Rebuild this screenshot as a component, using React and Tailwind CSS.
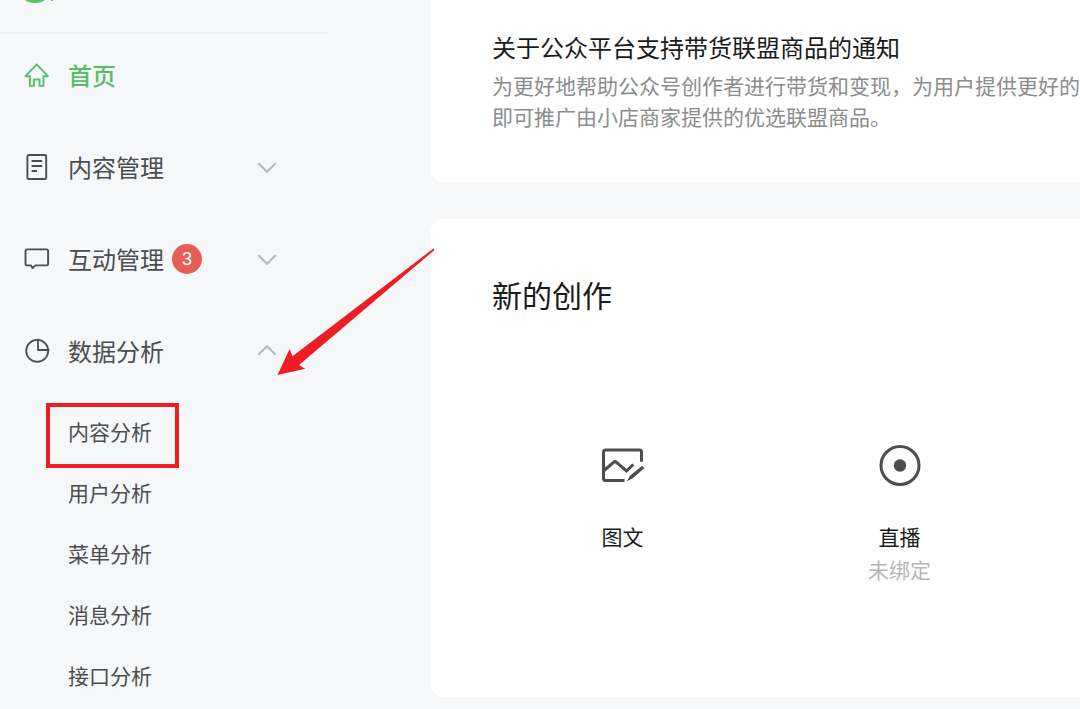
import React, { useState } from 'react';

const HomeIcon = () => (
    <svg className="w-[26px] h-[26px] shrink-0" viewBox="0 0 26 26" fill="none" stroke="currentColor" strokeWidth="1.9" strokeLinejoin="round">
        <path d="M12.7 2.4 1.5 14.200h4.400v9.700h4v-6.400h5.600v6.400h4v-9.700h4.400z" />
    </svg>
);

const DocIcon = () => (
    <svg className="w-[26px] h-[26px] shrink-0" viewBox="0 0 26 26" fill="none" stroke="currentColor" strokeWidth="1.9">
        <rect x="3.4" y="0.95" width="18.8" height="24.1" rx="1.4" />
        <path d="M7.600 7h10.600M7.600 12h10.600M7.600 17h5.400" />
    </svg>
);

const ChatIcon = () => (
    <svg className="w-[26px] h-[26px] shrink-0" viewBox="0 0 26 26" fill="none" stroke="currentColor" strokeWidth="1.9" strokeLinejoin="round">
        <path d="M3 3.4h19.600a1.500 1.500 0 0 1 1.500 1.500v13a1.500 1.500 0 0 1-1.500 1.500H11.400L8.600 22.200 7 19.400H3a1.500 1.500 0 0 1-1.500-1.500v-13A1.500 1.500 0 0 1 3 3.400z" />
    </svg>
);

const PieIcon = () => (
    <svg className="w-[26px] h-[26px] shrink-0" viewBox="0 0 26 26" fill="none" stroke="currentColor" strokeWidth="1.8" strokeLinejoin="round">
        <circle cx="13.200" cy="12.800" r="11" />
        <path d="M14 0.800v11.200h11.300" />
    </svg>
);

const Chevron = ({ open }) => (
    <svg className="w-[20px] h-[12px] ml-auto shrink-0 text-[#b4b6b8]" viewBox="0 0 20 12" fill="none" stroke="currentColor" strokeWidth="2">
        {open ? <path d="M1.300 9.800 10 1.200 18.700 9.800" /> : <path d="M1.300 2.200 10 10.800 18.700 2.200" />}
    </svg>
);

const ArticleIcon = () => (
    <svg className="w-[44px] h-[44px]" viewBox="0 0 44 44" fill="none" stroke="currentColor" strokeWidth="3">
        <path d="M23.500 37.500H4.500a2 2 0 0 1-2-2V9a2 2 0 0 1 2-2h34a2 2 0 0 1 2 2v9.800" />
        <path d="M3 27.500 12.600 19.300a2.200 2.200 0 0 1 2.900 0L25.500 28l6.800-6.500" />
        <path d="M25.800 38.300 29.200 32.600 41.200 22.700 43.300 25.200 31.400 35.400z" fill="currentColor" stroke="none" />
    </svg>
);

const LiveIcon = () => (
    <svg className="w-[44px] h-[44px]" viewBox="0 0 44 44">
        <circle cx="22" cy="22.500" r="19" fill="none" stroke="currentColor" strokeWidth="3" />
        <circle cx="22" cy="22.500" r="6.200" fill="currentColor" />
    </svg>
);

const menu = [
    { name: '首页', icon: HomeIcon, active: true },
    { name: '内容管理', icon: DocIcon, children: [] },
    { name: '互动管理', icon: ChatIcon, badge: 3, children: [] },
    { name: '数据分析', icon: PieIcon, children: ['内容分析', '用户分析', '菜单分析', '消息分析', '接口分析'] },
];

const creations = [
    { name: '图文', icon: ArticleIcon },
    { name: '直播', icon: LiveIcon, note: '未绑定' },
];

const Sidebar = () => {
    const [openMenu, setOpenMenu] = useState('数据分析');

    return (
        <aside className="w-[328px] shrink-0">
            <div className="h-[34px] pl-4 border-b-2 border-[#eeeff1]">
                <svg className="w-[40px] h-[4px]" viewBox="0 0 40 4" fill="#57be6a">
                    <circle cx="19" cy="-15" r="18" />
                    <rect x="35" y="0" width="2" height="1" />
                </svg>
            </div>
            <nav className="mt-[11px]">
                <ul className="flex flex-col gap-8">
                    {menu.map((item) => {
                        const Icon = item.icon;
                        const open = openMenu === item.name;
                        return (
                            <li key={item.name}>
                                <button
                                    type="button"
                                    onClick={() => setOpenMenu(open ? '' : item.name)}
                                    className={`flex items-center w-full h-[60px] pl-6 pr-[51px] text-2xl ${item.active ? 'text-[#57be6a] font-medium' : 'text-[#4c4d4e]'}`}
                                >
                                    <Icon />
                                    <span className="ml-[18px]">{item.name}</span>
                                    {item.badge && (
                                        <span className="flex items-center justify-center w-[30px] h-[30px] ml-2 rounded-full bg-[#e75e58] text-white text-lg font-['Liberation_Sans',sans-serif]">
                                            {item.badge}
                                        </span>
                                    )}
                                    {item.children && <Chevron open={open} />}
                                </button>
                                {open && item.children && (
                                    <ul className="pt-5">
                                        {item.children.map((child, i) => (
                                            <li key={child} className="relative flex items-center h-[61px] pl-[68px] text-[21px] text-[#4c4d4e]">
                                                <a href="#">{child}</a>
                                                {i === 0 && <span className="absolute left-[46px] top-0.5 w-[133px] h-[65px] border-4 border-[#ee1c25] pointer-events-none" />}
                                            </li>
                                        ))}
                                    </ul>
                                )}
                            </li>
                        );
                    })}
                </ul>
            </nav>
        </aside>
    );
};

const App = () => {
    return (
        <div className="relative flex min-h-screen overflow-hidden bg-[#f5f7f9] font-['Noto_Sans_CJK_SC',sans-serif]">
            <Sidebar />

            <main className="flex-1 min-w-0 ml-[103px]">
                {/* Notice */}
                <section className="pt-8 pb-[50px] pl-[61px] bg-white rounded-bl-xl overflow-hidden">
                    <h2 className="text-2xl leading-[30px] text-[#1b1b1b]">关于公众平台支持带货联盟商品的通知</h2>
                    <p className="mt-2 text-[21px] leading-[31px] text-[#8b8c8c] whitespace-nowrap">
                        为更好地帮助公众号创作者进行带货和变现，为用户提供更好的
                        <br />
                        即可推广由小店商家提供的优选联盟商品。
                    </p>
                </section>

                {/* New creation */}
                <section className="mt-[37px] pt-[55px] pb-[111px] bg-white rounded-l-xl">
                    <h2 className="pl-[61px] text-[30px] leading-[40px] text-[#1b1b1b]">新的创作</h2>
                    <div className="grid grid-cols-[repeat(auto-fill,277px)] mt-[129px] pl-[53px]">
                        {creations.map((item) => {
                            const Icon = item.icon;
                            return (
                                <button key={item.name} type="button" className="flex flex-col items-center justify-start text-[21px] leading-[33px] text-[#1b1b1b]">
                                    <span className="text-[#4c4d4e]"><Icon /></span>
                                    <span className="mt-[33px]">{item.name}</span>
                                    {item.note && <span className="text-[#b4b5b5]">{item.note}</span>}
                                </button>
                            );
                        })}
                    </div>
                </section>
            </main>

            {/* Arrow pointing at the open menu */}
            <svg className="absolute left-[277px] top-[248px] w-[158px] h-[128px] pointer-events-none" viewBox="0 0 158 128" fill="#ee1c25">
                <path d="M0.500 127 12.600 101 15.500 108.300 156.400 0.600 157.500 2 22 117 28.200 120.800z" />
            </svg>
        </div>
    );
};

export default App;
